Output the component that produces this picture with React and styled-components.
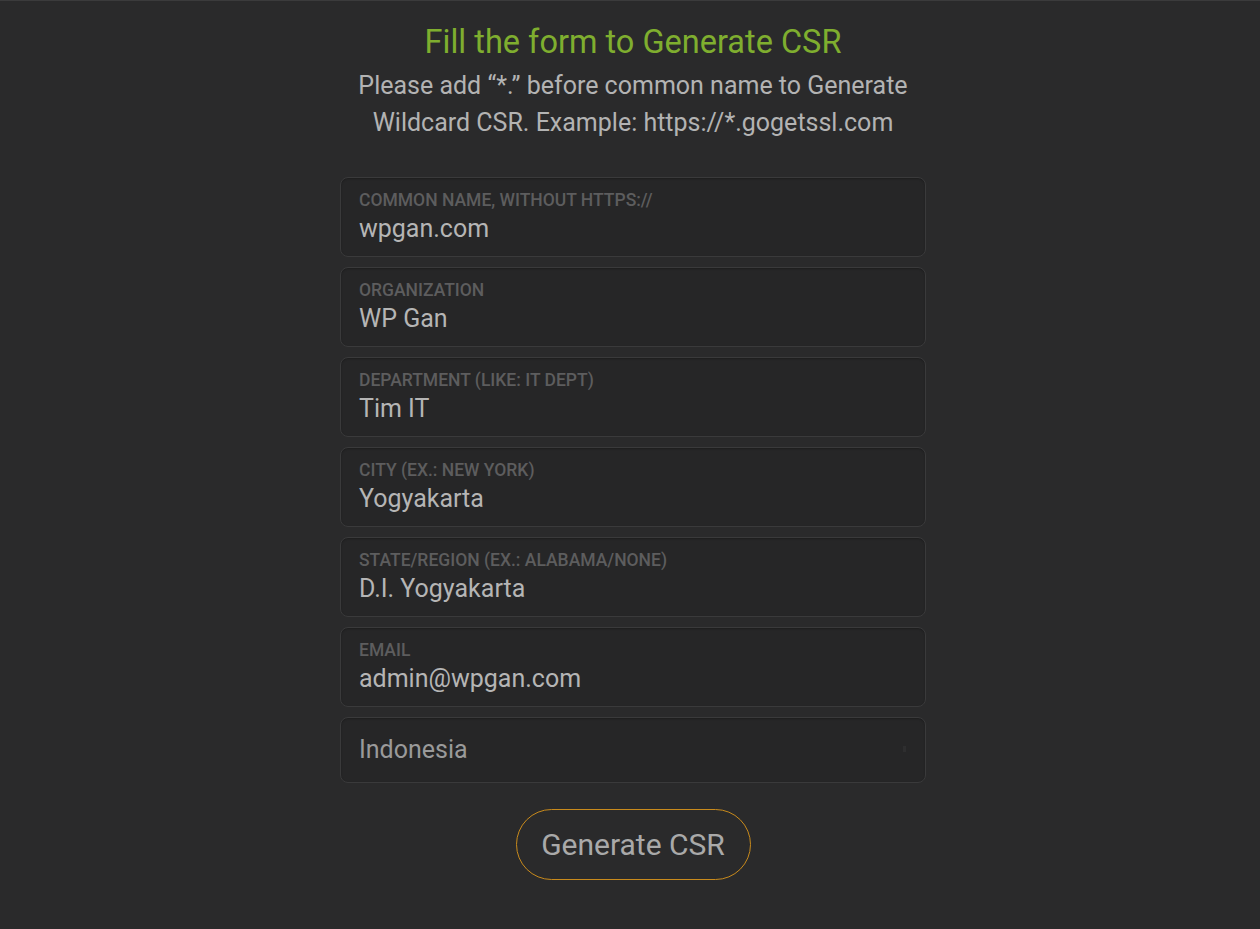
import React from 'react';
import styled, { createGlobalStyle } from 'styled-components';

const Global = createGlobalStyle`
  html, body {
    margin: 0;
    padding: 0;
    background: #2a2a2b;
    font-family: Roboto, "Liberation Sans", sans-serif;
  }
`;

const Page = styled.div`
  min-height: 929px;
  box-sizing: border-box;
  border-top: 1px solid #3b3b3c;
  padding: 21px 0 0 6px;
  display: flex;
  flex-direction: column;
  align-items: center;
`;

const Title = styled.h2`
  margin: 0;
  font-size: 32.5px;
  font-weight: 400;
  line-height: 40px;
  color: #7fae2f;
`;

const Intro = styled.p`
  margin: 5px 0 0;
  width: 600px;
  text-align: center;
  font-size: 25px;
  line-height: 37px;
  color: #b3b3b3;
`;

const Form = styled.form`
  margin-top: 36px;
  width: 586px;
  display: flex;
  flex-direction: column;
  gap: 10px;
`;

const Field = styled.label`
  box-sizing: border-box;
  height: ${(p) => (p.$plain ? 66 : 80)}px;
  padding: ${(p) => (p.$plain ? '0 18px' : '12px 18px 0')};
  display: flex;
  flex-direction: column;
  justify-content: ${(p) => (p.$plain ? 'center' : 'flex-start')};
  background: #262627;
  border: 1px solid #3a3a3b;
  border-radius: 8px;
  box-shadow: inset 0 1px 2px rgba(0, 0, 0, 0.25);
  position: relative;
`;

const Label = styled.span`
  font-size: 17.5px;
  font-weight: 500;
  line-height: 20px;
  color: #5d5d5e;
  text-transform: uppercase;
`;

const Value = styled.span`
  margin-top: ${(p) => (p.$muted ? 0 : 3)}px;
  font-size: 25px;
  line-height: 32px;
  color: ${(p) => (p.$muted ? '#9a9a9a' : '#b5b5b5')};
`;

const Arrow = styled.span`
  position: absolute;
  right: 19px;
  top: 50%;
  width: 3px;
  height: 6px;
  margin-top: -4px;
  background: #2e2e2f;
`;

const Submit = styled.button`
  align-self: center;
  margin-top: 16px;
  width: 235px;
  height: 71px;
  border-radius: 36px;
  border: 1px solid #c88a1c;
  background: transparent;
  color: #a9a9a9;
  font-family: Roboto, "Liberation Sans", sans-serif;
  font-size: 30px;
  cursor: pointer;
`;

const fields = [
  ['Common name, without https://', 'wpgan.com'],
  ['Organization', 'WP Gan'],
  ['Department (like: IT dept)', 'Tim IT'],
  ['City (ex.: New York)', 'Yogyakarta'],
  ['State/Region (ex.: Alabama/None)', 'D.I. Yogyakarta'],
  ['Email', 'admin@wpgan.com'],
];

export default function App() {
  return (
    <>
      <Global />
      <Page>
        <Title>Fill the form to Generate CSR</Title>
        <Intro>
          Please add “*.” before common name to Generate Wildcard CSR. Example: https://*.gogetssl.com
        </Intro>
        <Form onSubmit={(e) => e.preventDefault()}>
          {fields.map(([label, value]) => (
            <Field key={label}>
              <Label>{label}</Label>
              <Value>{value}</Value>
            </Field>
          ))}
          <Field $plain>
            <Value $muted>Indonesia</Value>
            <Arrow />
          </Field>
          <Submit type="submit">Generate CSR</Submit>
        </Form>
      </Page>
    </>
  );
}
